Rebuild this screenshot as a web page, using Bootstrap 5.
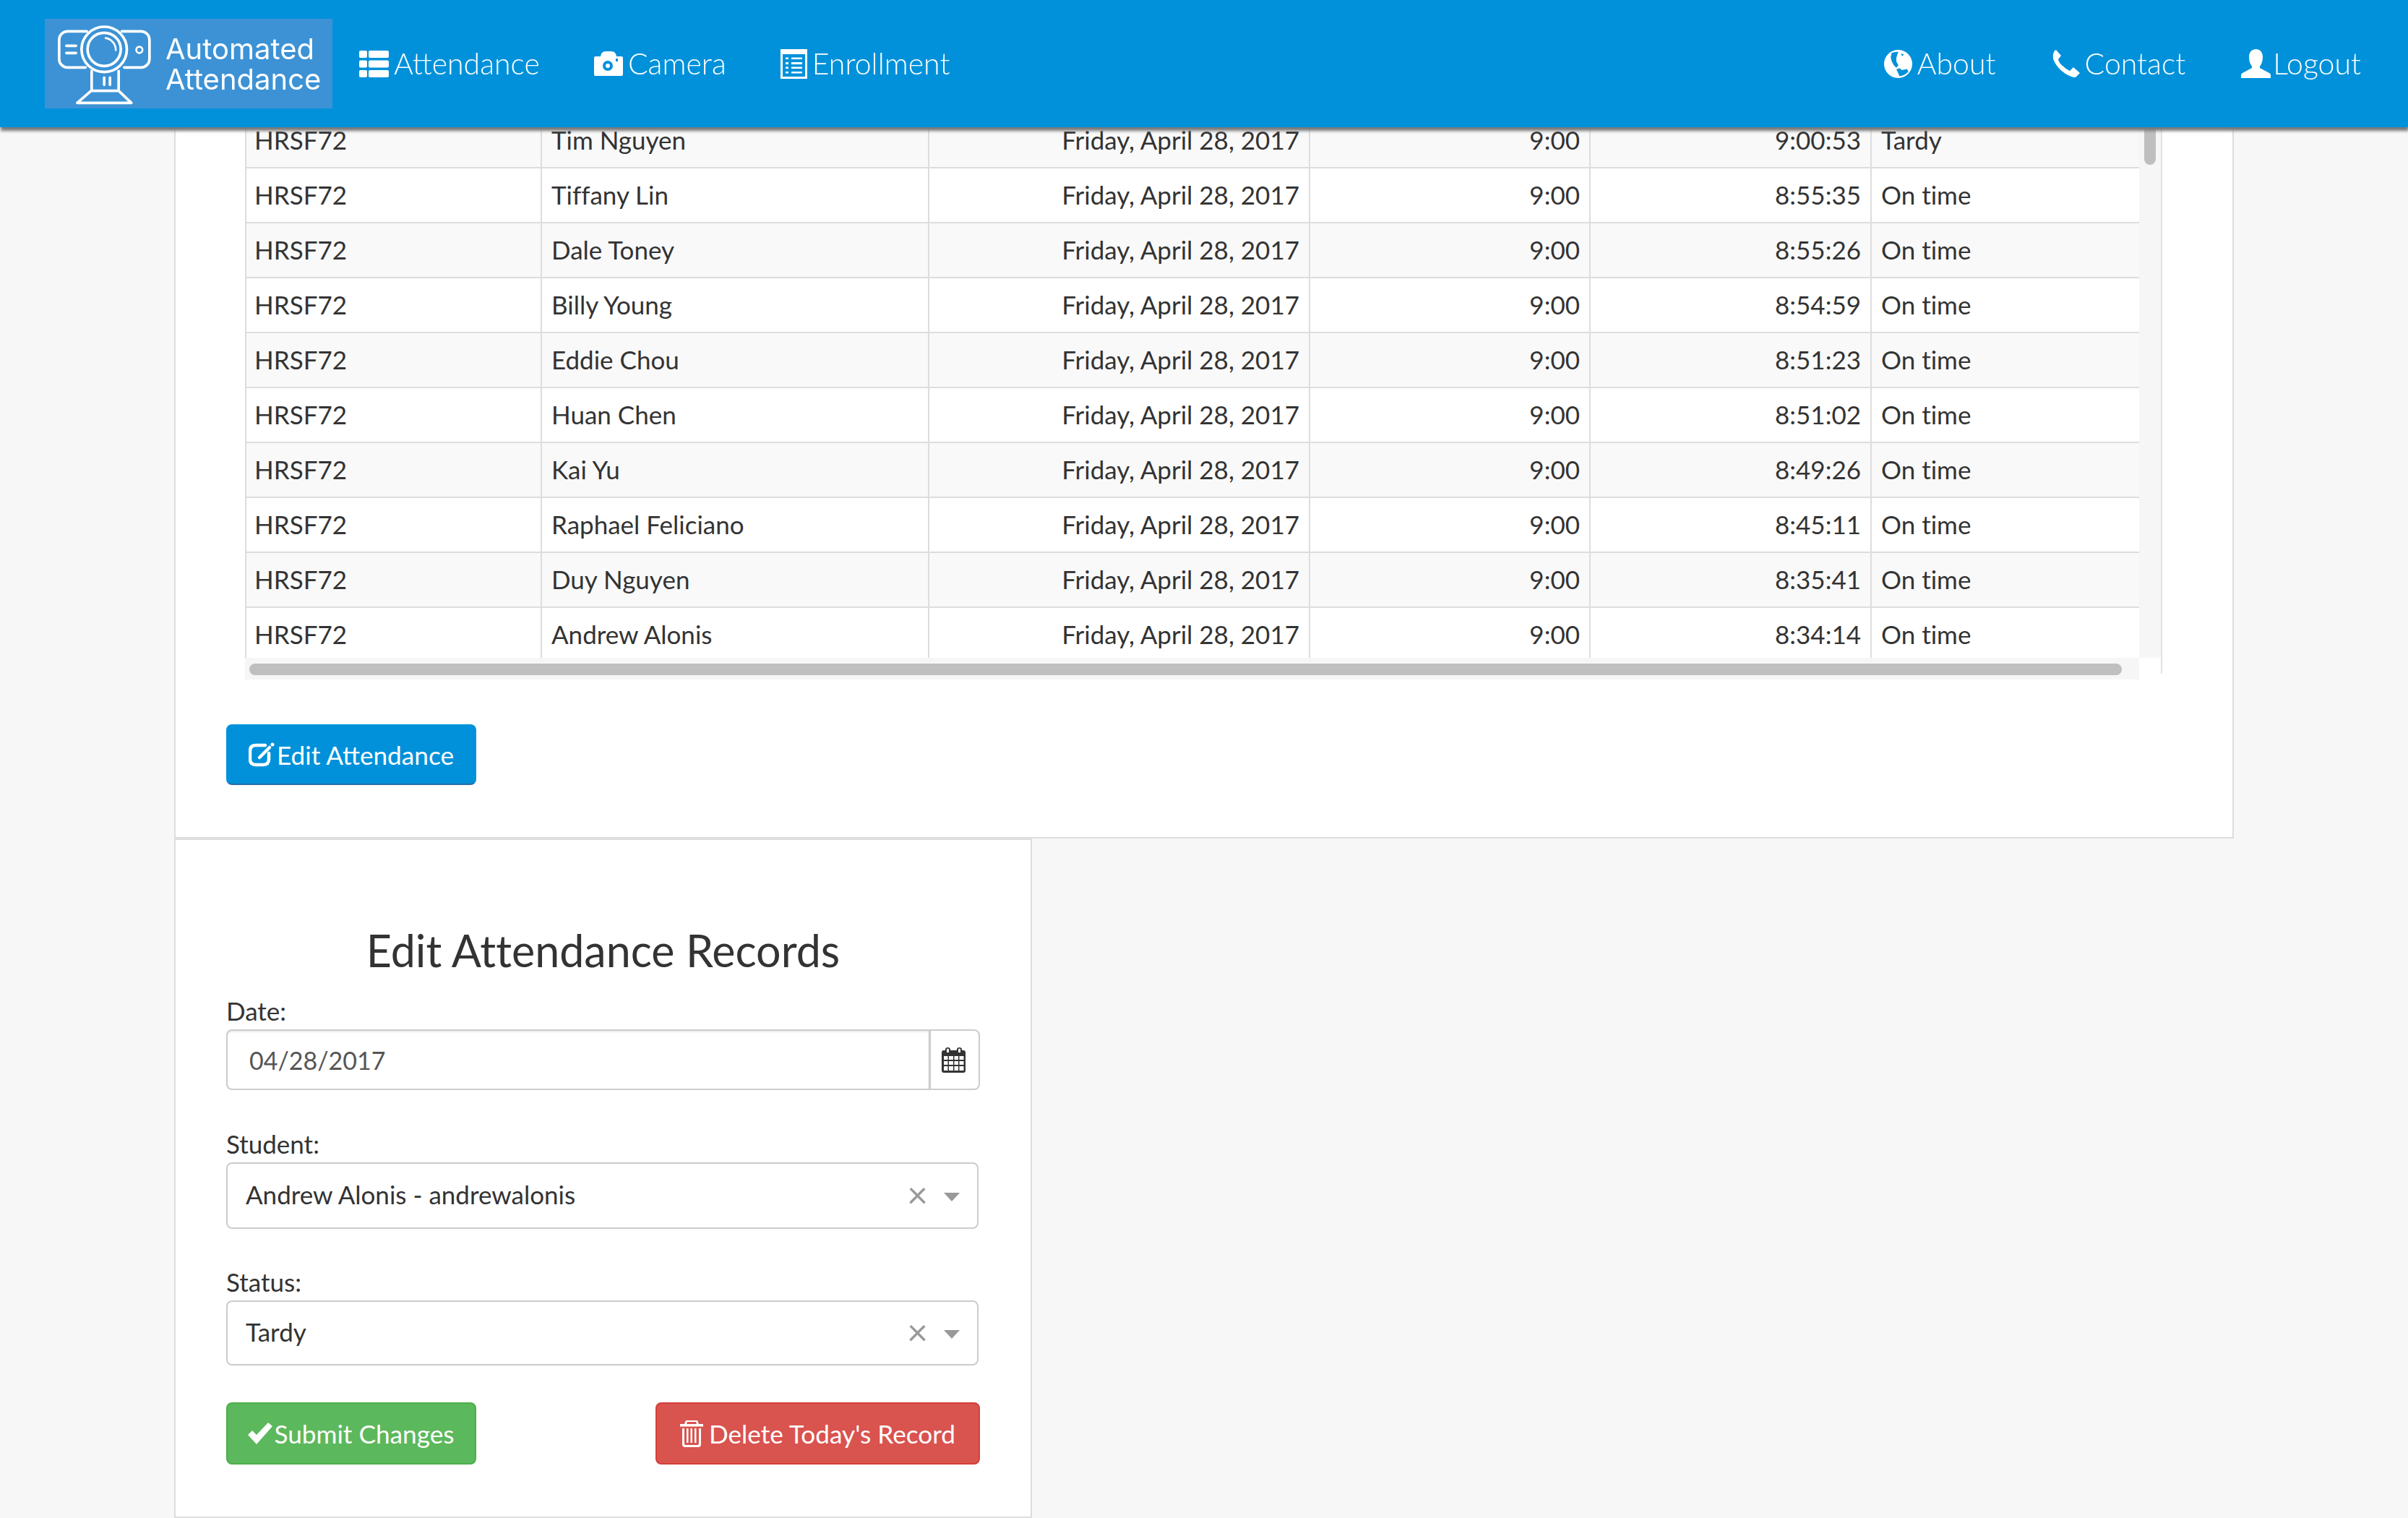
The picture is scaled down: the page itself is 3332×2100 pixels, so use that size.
<!DOCTYPE html>
<html lang="en">
<head>
<meta charset="utf-8">
<title>Automated Attendance</title>
<link href="https://cdn.jsdelivr.net/npm/bootstrap@5.3.0/dist/css/bootstrap.min.css" rel="stylesheet">
<style>
html,body{height:2100px;overflow:hidden}
body{background:#f7f7f7;font-family:"Lato","Liberation Sans",sans-serif;font-size:35px;line-height:48px;color:#333;font-variant-ligatures:none}
.aa-bar{background:#0091da;height:176px;padding:0 65px 0 62px;box-shadow:1px 5px 4px #777}
.aa-logo{width:398px;height:124px;background:#3c92d5;padding:0;margin:0;color:#fff;gap:0}
.aa-logo svg{width:167px;height:124px;flex:none}
.aa-logo-text{font-family:"Inter","Open Sans",sans-serif;font-size:40px;line-height:42px;font-weight:400;padding-top:2px}
.aa-nav{gap:75px;margin-left:37px}
.aa-nav.aa-right{margin-left:auto;gap:77px}
.aa-bar.navbar-expand .navbar-nav .nav-link{color:#fff;font-weight:300;font-size:41px;line-height:60px;padding:0;display:flex;align-items:center;gap:7px;font-variant-ligatures:normal}
.aa-bar.navbar-expand .navbar-nav .nav-link.aa-tight{gap:3px}
.aa-ico{fill:#fff;flex:none}
.aa-panel{background:#fff;border:2px solid #ddd;border-top:0;margin-left:241px;width:2850px;height:1160px;padding:155px 0 0 70px}
.aa-tablebox{width:2653px;height:785px;position:relative;margin-left:26px}
.aa-tablerow{height:755px}
.aa-clip{width:2621px;height:755px;overflow:hidden;flex:none}
.aa-table{width:2621px;table-layout:fixed;margin:0;--bs-table-striped-bg:#f9f9f9;--bs-table-bg:#fff;--bs-table-color:#333;--bs-table-striped-color:#333;border-collapse:collapse}
.aa-table>tbody>tr>td{border:2px solid #ddd;padding:12px 13px 14px;height:76px;line-height:48px;font-size:35px}
.aa-table>tbody>tr>td:first-child{padding-left:11px}
.aa-vtrack{width:32px;height:755px;background:#f6f6f6;border-right:2px solid #e2e2e2;position:relative;flex:none}
.aa-vthumb{position:absolute;left:7px;top:0;width:16px;height:73px;background:#bfbfbf;border-radius:0 0 8px 8px}
.aa-htrack{width:2621px;height:30px;background:#f6f6f6;padding:8px 24px 6px 6px}
.aa-hthumb{height:16px;background:#bfbfbf;border-radius:8px}
.aa-cornerline{position:absolute;right:0;top:755px;width:2px;height:22px;background:#e2e2e2}
.btn.aa-btn{font-size:35.200px;line-height:48px;height:86px;border-width:2px;border-radius:8px;color:#fff;display:inline-flex;align-items:center;justify-content:center;padding:0;gap:2px;font-weight:400}
.aa-blue{background:#0091da;border-color:#0091da #0091da #2a6da8;width:346px;margin-top:62px;height:84px!important}
.aa-green{background:#5cb85c;border-color:#4cae4c;width:346px}
.aa-red{background:#d9534f;border-color:#d43f3a;width:449px;gap:8px!important}
.aa-panel2{background:#fff;border:2px solid #ddd;margin-left:241px;width:1187px;height:940px;padding:118px 70px 0 70px}
.aa-title{font-size:61px;line-height:70px;font-weight:400;text-align:center;margin:0 0 26px;color:#333}
.aa-label{display:block;margin:0;height:48px;line-height:44px;font-size:35px}
.aa-group{height:84px;margin-bottom:52px;width:1043px}
.aa-group .form-control{font-size:34px;color:#555;height:84px;padding:0 30px;border:2px solid #ccc;border-radius:8px 0 0 8px;box-shadow:inset 0 2px 2px rgba(0,0,0,.08)}
.aa-group .input-group-text{background:#fff;border:2px solid #ccc;border-radius:0 8px 8px 0;width:70px;justify-content:center;padding:0 3px 0 0;margin-left:-2px}
.aa-select{width:1041px;height:92px;border:2px solid #ccc;border-radius:8px;padding:0 24px 4px 25px;margin-bottom:51px;background:#fff}
.aa-select.aa-sel2{height:90px;margin-bottom:51px}
.aa-x{color:#999;font-size:50px;line-height:1;margin-left:auto;margin-right:22px}
.aa-arrow{width:0;height:0;border-left:11px solid transparent;border-right:11px solid transparent;border-top:12px solid #999;margin-top:8px}
</style>
</head>
<body>
<nav class="navbar fixed-top navbar-expand aa-bar d-flex align-items-center flex-nowrap">
  <a class="navbar-brand aa-logo d-flex align-items-center" href="#">
    <svg viewBox="66 48 500 372" fill="none" stroke="#fff" stroke-width="11" stroke-linecap="round" stroke-linejoin="round" aria-hidden="true">
      <path d="M240 100H160a35 35 0 0 0-35 35V215a35 35 0 0 0 35 35H235"/>
      <path d="M385 100H465a35 35 0 0 1 35 35V215a35 35 0 0 1-35 35H395"/>
      <circle cx="312" cy="175" r="94"/>
      <circle cx="312" cy="175" r="69"/>
      <path stroke-width="8" d="M318 128A50 50 0 0 1 360 178"/>
      <path d="M155 160H195M155 190H195"/>
      <circle cx="458" cy="177" r="13" stroke-width="8"/>
      <path d="M260 265V345M372 265V345M312 292V322M336 292V322"/>
      <path d="M258 347H372L425 397H200Z"/>
    </svg>
    <span class="aa-logo-text">Automated<br>Attendance</span>
  </a>
  <ul class="navbar-nav aa-nav">
    <li class="nav-item"><a class="nav-link" href="#">
      <svg class="aa-ico" width="41" height="37" viewBox="0 0 41 37"><rect width="11" height="10" rx="2"/><rect x="13" width="28" height="10" rx="2"/><rect y="13.500" width="11" height="10" rx="2"/><rect x="13" y="13.500" width="28" height="10" rx="2"/><rect y="27" width="11" height="10" rx="2"/><rect x="13" y="27" width="28" height="10" rx="2"/></svg>Attendance</a></li>
    <li class="nav-item"><a class="nav-link" href="#">
      <svg class="aa-ico" width="40" height="34" viewBox="0 0 40 34"><path fill-rule="evenodd" d="M2 7H9Q10 0 16 0H24Q30 0 31 7H38Q40 7 40 9V32Q40 34 38 34H2Q0 34 0 32V9Q0 7 2 7ZM19 13A7 7 0 1 0 19 27A7 7 0 1 0 19 13ZM30 10V14H33V10Z"/><circle cx="19" cy="20" r="3"/></svg>Camera</a></li>
    <li class="nav-item"><a class="nav-link" href="#">
      <svg class="aa-ico" width="37" height="41" viewBox="0 0 37 41"><path fill-rule="evenodd" d="M0 0H37V41H0ZM3 7V38H34V7Z"/><path d="M7 11.500H11V14H7ZM15 11.500H30V14H15ZM7 18H11V21H7ZM15 18H30V21H15ZM7 24.500H11V27H7ZM15 24.500H30V27H15ZM7 31H11V33.500H7ZM15 31H30V33.500H15Z"/></svg>Enrollment</a></li>
  </ul>
  <ul class="navbar-nav aa-nav aa-right">
    <li class="nav-item"><a class="nav-link" href="#">
      <svg class="aa-ico" width="39" height="39" viewBox="0 0 110 110"><circle cx="55" cy="55" r="55"/><path fill="#0091da" d="M30 12Q42 6 56 8L52 18L48 30L48 45L56 60L48 70L38 60L30 45L26 28Z"/><path fill="#0091da" d="M48 76L60 71L70 79L90 75L95 85Q80 100 60 102L55 90Z"/><path fill="#0091da" d="M68 15L76 17L74 23L67 21Z"/></svg>About</a></li>
    <li class="nav-item"><a class="nav-link" href="#">
      <svg class="aa-ico" width="39" height="38" viewBox="0 0 39 38"><path d="M4 1L6 0L13 8L9 13Q10 18 15 22Q20 27 25 29L30 24L39 32L33 38Q27 38 19 33Q8 26 3 15Q0 8 4 1Z"/></svg>Contact</a></li>
    <li class="nav-item"><a class="nav-link aa-tight" href="#">
      <svg class="aa-ico" width="41" height="40" viewBox="0 0 41 40"><path d="M20.500 0C27 0 30 5 30 11C30 17 28 21 26 24V26L39 33Q41 34 41 36V40H0V36Q0 34 2 33L15 26V24C13 21 11 17 11 11C11 5 14 0 20.500 0Z"/></svg>Logout</a></li>
  </ul>
</nav>

<main>
  <section class="aa-panel">
    <div class="aa-tablebox">
      <div class="aa-tablerow d-flex">
        <div class="aa-clip">
          <table class="table table-striped table-bordered aa-table">
            <colgroup><col style="width:409px"><col style="width:536px"><col style="width:527px"><col style="width:388px"><col style="width:389px"><col style="width:372px"></colgroup>
            <tbody>
              <tr><td>HRSF72</td><td>Tim Nguyen</td><td class="text-end">Friday, April 28, 2017</td><td class="text-end">9:00</td><td class="text-end">9:00:53</td><td>Tardy</td></tr>
              <tr><td>HRSF72</td><td>Tiffany Lin</td><td class="text-end">Friday, April 28, 2017</td><td class="text-end">9:00</td><td class="text-end">8:55:35</td><td>On time</td></tr>
              <tr><td>HRSF72</td><td>Dale Toney</td><td class="text-end">Friday, April 28, 2017</td><td class="text-end">9:00</td><td class="text-end">8:55:26</td><td>On time</td></tr>
              <tr><td>HRSF72</td><td>Billy Young</td><td class="text-end">Friday, April 28, 2017</td><td class="text-end">9:00</td><td class="text-end">8:54:59</td><td>On time</td></tr>
              <tr><td>HRSF72</td><td>Eddie Chou</td><td class="text-end">Friday, April 28, 2017</td><td class="text-end">9:00</td><td class="text-end">8:51:23</td><td>On time</td></tr>
              <tr><td>HRSF72</td><td>Huan Chen</td><td class="text-end">Friday, April 28, 2017</td><td class="text-end">9:00</td><td class="text-end">8:51:02</td><td>On time</td></tr>
              <tr><td>HRSF72</td><td>Kai Yu</td><td class="text-end">Friday, April 28, 2017</td><td class="text-end">9:00</td><td class="text-end">8:49:26</td><td>On time</td></tr>
              <tr><td>HRSF72</td><td>Raphael Feliciano</td><td class="text-end">Friday, April 28, 2017</td><td class="text-end">9:00</td><td class="text-end">8:45:11</td><td>On time</td></tr>
              <tr><td>HRSF72</td><td>Duy Nguyen</td><td class="text-end">Friday, April 28, 2017</td><td class="text-end">9:00</td><td class="text-end">8:35:41</td><td>On time</td></tr>
              <tr><td>HRSF72</td><td>Andrew Alonis</td><td class="text-end">Friday, April 28, 2017</td><td class="text-end">9:00</td><td class="text-end">8:34:14</td><td>On time</td></tr>
            </tbody>
          </table>
        </div>
        <div class="aa-vtrack"><div class="aa-vthumb"></div></div>
      </div>
      <div class="aa-htrack"><div class="aa-hthumb"></div></div>
      <div class="aa-cornerline"></div>
    </div>
    <button type="button" class="btn aa-btn aa-blue">
      <svg width="37" height="34" viewBox="0 0 37 34" fill="none" stroke="#fff" stroke-linecap="round"><path stroke-width="4.500" d="M23 4H10Q2 4 2 12V23Q2 31 10 31H20Q28 31 28 23V15"/><path stroke-width="4.500" d="M15 21L29 7"/><circle cx="33" cy="3" r="2.500" fill="#fff" stroke="none"/></svg>Edit Attendance</button>
  </section>

  <section class="aa-panel2">
    <h3 class="aa-title">Edit Attendance Records</h3>
    <form>
      <label class="aa-label" for="aa-date">Date:</label>
      <div class="input-group aa-group">
        <input id="aa-date" class="form-control" type="text" value="04/28/2017">
        <span class="input-group-text">
          <svg width="33" height="35" viewBox="0 0 33 35"><path fill="#333" d="M3 4H5V3Q5 0 8.500 0T12 3V4H21V3Q21 0 24.500 0T28 3V4H30Q33 4 33 7V32Q33 35 30 35H3Q0 35 0 32V7Q0 4 3 4Z"/><path fill="#fff" d="M7 3Q7 1.500 8.500 1.500T10 3V7H7ZM23 3Q23 1.500 24.500 1.500T26 3V7H23ZM3 12H8.500V17H3ZM10 12H16V17H10ZM17.500 12H23V17H17.500ZM24.500 12H30.500V17H24.500ZM3 19H8.500V24H3ZM10 19H16V24H10ZM17.500 19H23V24H17.500ZM24.500 19H30.500V24H24.500ZM3 26H8.500V32H3ZM10 26H16V32H10ZM17.500 26H23V32H17.500ZM24.500 26H30.500V32H24.500Z"/></svg>
        </span>
      </div>
      <label class="aa-label">Student:</label>
      <div class="aa-select d-flex align-items-center">
        <span>Andrew Alonis - andrewalonis</span><span class="aa-x">×</span><span class="aa-arrow"></span>
      </div>
      <label class="aa-label">Status:</label>
      <div class="aa-select aa-sel2 d-flex align-items-center">
        <span>Tardy</span><span class="aa-x">×</span><span class="aa-arrow"></span>
      </div>
      <div class="d-flex justify-content-between">
        <button type="button" class="btn aa-btn aa-green">
          <svg width="34" height="30" viewBox="0 0 34 30" fill="#fff"><path d="M0 17L6 11L12 17L28 0L34 5L12 30Z"/></svg>Submit Changes</button>
        <button type="button" class="btn aa-btn aa-red">
          <svg width="32" height="37" viewBox="0 0 32 37" fill="#fff"><path fill-rule="evenodd" d="M8 0H24L26 5H32V8.500H0V5H6ZM10 2L9 5H23L22 2Z"/><path d="M3 11H6V32Q6 34 8 34H24Q26 34 26 32V11H29V33Q29 37 25 37H7Q3 37 3 33ZM9 11H11.500V31H9ZM14.500 11H17V31H14.500ZM20 11H22.500V31H20Z"/></svg>Delete Today's Record</button>
      </div>
    </form>
  </section>
</main>
<script src="https://cdn.jsdelivr.net/npm/bootstrap@5.3.0/dist/js/bootstrap.bundle.min.js"></script>
</body>
</html>
